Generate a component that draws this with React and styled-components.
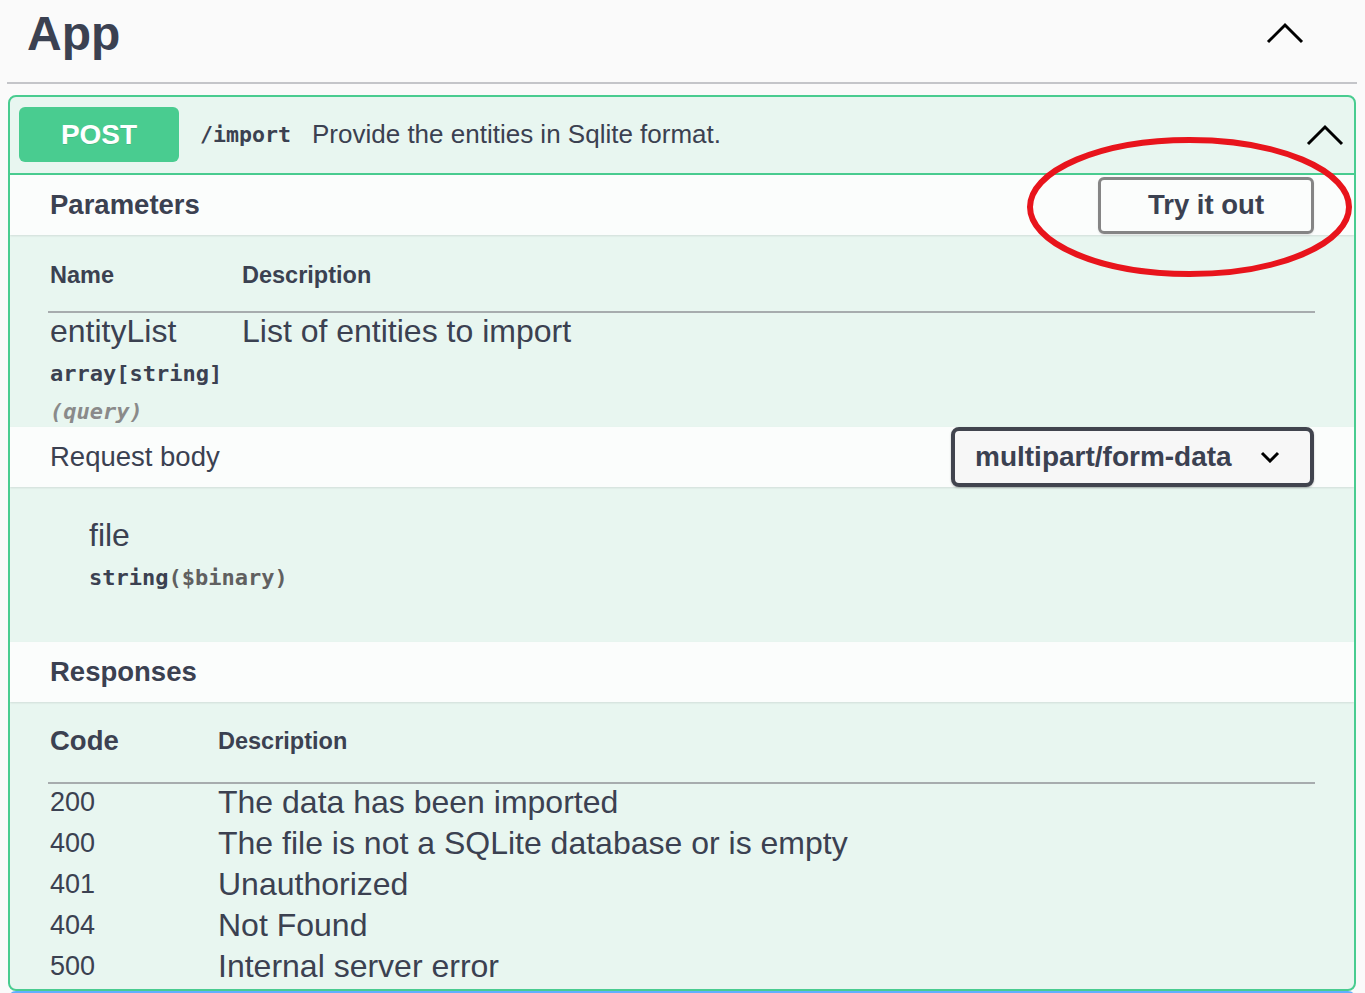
import React from "react";
import styled, { createGlobalStyle } from "styled-components";

const GlobalStyle = createGlobalStyle`
	body {
		margin: 0;
		background: #fafafa;
		font-family: "Liberation Sans", Arial, sans-serif;
		color: #3b4151;
	}
`;

const Page = styled.div`
	position: relative;
	padding: 0 8px 0 7px;
`;

const TagHeader = styled.div`
	height: 66px;
	padding: 0 53px 16px 20px;
	display: flex;
	align-items: center;
	justify-content: space-between;
	border-bottom: 2px solid #c4c5c9;
`;

const Title = styled.h3`
	margin: 0;
	font-size: 48px;
	font-weight: bold;
	line-height: 55px;
`;

const Chevron = styled.svg`
	display: block;
	flex-shrink: 0;
	margin-left: ${props => (props.auto ? "auto" : "0")};
	margin-right: ${props => props.right || 0}px;
`;

const Opblock = styled.div`
	margin: 11px 1px 0 1px;
	border: 2px solid #49cc90;
	border-radius: 8px;
	background: #e8f6f0;
	overflow: hidden;
`;

const Summary = styled.div`
	display: flex;
	align-items: center;
	padding: 10px 10px 11px 9px;
	border-bottom: 2px solid #49cc90;
`;

const Method = styled.span`
	width: 160px;
	height: 55px;
	border-radius: 6px;
	background: #49cc90;
	color: #fff;
	font-size: 28px;
	font-weight: bold;
	text-shadow: 0 1px 0 rgba(0, 0, 0, 0.1);
	display: flex;
	align-items: center;
	justify-content: center;
`;

const Path = styled.span`
	margin-left: 21px;
	font-family: "DejaVu Sans Mono", "Liberation Mono", monospace;
	font-size: 21.6px;
	font-weight: bold;
`;

const SummaryText = styled.span`
	margin-left: 21px;
	font-size: 26px;
`;

const Band = styled.div`
	height: 60px;
	padding: 0 40px 0 40px;
	display: flex;
	align-items: center;
	justify-content: space-between;
	background: rgba(255, 255, 255, 0.8);
	box-shadow: 0 1px 2px rgba(0, 0, 0, 0.1);
`;

const BandTitle = styled.h4`
	margin: 0;
	font-size: 27.5px;
	font-weight: ${props => (props.light ? "normal" : "bold")};
`;

const TryButton = styled.button`
	width: 216px;
	height: 57px;
	border: 3px solid #858585;
	border-radius: 6px;
	background: transparent;
	box-shadow: 0 1px 2px rgba(0, 0, 0, 0.1);
	font-family: inherit;
	font-size: 27.5px;
	font-weight: bold;
	color: #3b4151;
`;

const Select = styled.div`
	width: 363px;
	height: 60px;
	box-sizing: border-box;
	padding: 0 30px 0 20px;
	border: 4px solid #41444e;
	border-radius: 8px;
	background: #f7f7f7;
	box-shadow: 0 1px 2px rgba(0, 0, 0, 0.25);
	display: flex;
	align-items: center;
	justify-content: space-between;
	font-size: 28px;
	font-weight: bold;
`;

const TableWrap = styled.div`
	padding: ${props => props.top}px 39px 0 38px;
`;

const Row = styled.div`
	display: grid;
	grid-template-columns: ${props => props.col}px 1fr;
	align-items: ${props => (props.head ? "center" : "start")};
	height: ${props => (props.h ? props.h + "px" : "auto")};
	padding-bottom: ${props => props.pb || 0}px;
	border-bottom: ${props => (props.head ? "2px solid #a7acae" : "none")};
`;

const Th = styled.div`
	padding-left: 2px;
	font-size: ${props => props.size}px;
	font-weight: bold;
	line-height: 32px;
`;

const Cell = styled.div`
	padding-left: 2px;
	font-size: ${props => props.size}px;
	line-height: 36px;
`;

const NameCell = styled.div`
	padding-left: 2px;
	display: flex;
	flex-direction: column;
`;

const ParamName = styled.div`
	font-size: 32px;
	line-height: 36px;
`;

const Mono = styled.div`
	margin-top: ${props => props.mt}px;
	font-family: "DejaVu Sans Mono", "Liberation Mono", monospace;
	font-size: 22px;
	font-weight: bold;
	line-height: 30px;
	font-style: ${props => (props.italic ? "italic" : "normal")};
	color: ${props => (props.gray ? "#8a8a8a" : "#3b4151")};
`;

const Format = styled.span`
	color: #606060;
`;

const BodyArea = styled.div`
	padding: 30px 0 49px 79px;
`;

const Annotation = styled.svg`
	position: absolute;
	left: 1022px;
	top: 133px;
	pointer-events: none;
`;

const NextBlock = styled.div`
	margin: 0 1px;
	height: 60px;
	border: 2px solid #61affe;
	border-radius: 8px;
	background: #61affe;
`;

const responses = [
	["200", "The data has been imported"],
	["400", "The file is not a SQLite database or is empty"],
	["401", "Unauthorized"],
	["404", "Not Found"],
	["500", "Internal server error"],
];

const Up = ({ right, auto }) => (
	<Chevron width="38" height="22" viewBox="0 0 38 22" right={right} auto={auto}>
		<polyline points="2,20 19,3 36,20" fill="none" stroke="#000" strokeWidth="3" />
	</Chevron>
);

const App = () => {
	return (
		<Page>
			<GlobalStyle />
			<TagHeader>
				<Title>App</Title>
				<Up />
			</TagHeader>

			<Opblock>
				<Summary>
					<Method>POST</Method>
					<Path>/import</Path>
					<SummaryText>Provide the entities in Sqlite format.</SummaryText>
					<Up auto right={0} />
				</Summary>

				<Band>
					<BandTitle>Parameters</BandTitle>
					<TryButton>Try it out</TryButton>
				</Band>

				<TableWrap top={24}>
					<Row head col={192} pb={20}>
						<Th size={23.5}>Name</Th>
						<Th size={23.5}>Description</Th>
					</Row>
					<Row col={192}>
						<NameCell>
							<ParamName>entityList</ParamName>
							<Mono mt={10}>array[string]</Mono>
							<Mono mt={8} italic gray>(query)</Mono>
						</NameCell>
						<Cell size={32}>List of entities to import</Cell>
					</Row>
				</TableWrap>

				<Band>
					<BandTitle light>Request body</BandTitle>
					<Select>
						multipart/form-data
						<svg width="20" height="12" viewBox="0 0 20 12">
							<polyline points="2,2 10,10 18,2" fill="none" stroke="#000" strokeWidth="3" />
						</svg>
					</Select>
				</Band>

				<BodyArea>
					<ParamName>file</ParamName>
					<Mono mt={10}>
						string<Format>($binary)</Format>
					</Mono>
				</BodyArea>

				<Band>
					<BandTitle>Responses</BandTitle>
				</Band>

				<TableWrap top={23}>
					<Row head col={168} pb={25}>
						<Th size={27.5}>Code</Th>
						<Th size={23.5}>Description</Th>
					</Row>
					{responses.map(([code, text]) => (
						<Row key={code} col={168} h={41}>
							<Cell size={27}>{code}</Cell>
							<Cell size={32}>{text}</Cell>
						</Row>
					))}
				</TableWrap>
			</Opblock>

			<NextBlock />

			<Annotation width="336" height="150" viewBox="0 0 336 150">
				<ellipse cx="167.5" cy="74" rx="159.5" ry="67" fill="none" stroke="#e8141c" strokeWidth="6" />
			</Annotation>
		</Page>
	);
};

export default App;
